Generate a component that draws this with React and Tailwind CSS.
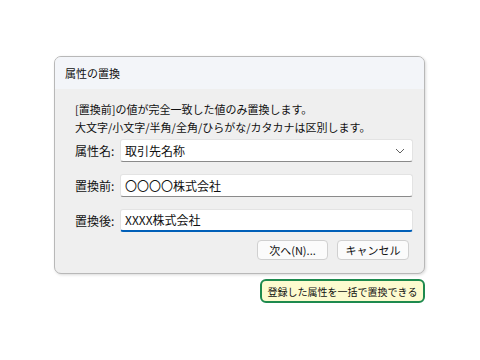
import React from "react";

const font = { fontFamily: '"Noto Sans CJK JP", "Noto Sans", sans-serif' };

const Field = ({ label, value, select, active }) => (
	<div className="flex items-center">
		<div className="w-[39px] text-right text-[12px] text-[#111] whitespace-nowrap">{label}</div>
		<div
			className={`ml-[6px] flex h-[23px] w-[293px] items-center justify-between rounded-[3px] bg-white pl-[4px] pr-[7px] text-[12px] text-[#111] border border-[#e3e3e3] ${
				active ? "border-b-2 border-b-[#005fb8]" : "border-b-[#8a8a8a]"
			}`}
		>
			<span className="leading-none">{value}</span>
			{select && (
				<svg width="10" height="6" viewBox="0 0 10 6" fill="none">
					<path d="M1 1l4 4 4-4" stroke="#606060" strokeWidth="1" />
				</svg>
			)}
		</div>
	</div>
);

const App = () => {
	return (
		<div className="h-[360px] w-[480px] bg-white pl-[54px] pt-[56px]" style={font}>
			{/* Dialog */}
			<div className="flex h-[218px] w-[371px] flex-col overflow-hidden rounded-[7px] border border-[#b8b8b8] bg-[#efefef] shadow-[1px_1px_3px_rgba(0,0,0,0.15)]">
				<div className="flex h-[32px] items-center bg-[#f3f5f9] pl-[10px] text-[11px] text-[#111]">
					属性の置換
				</div>
				<div className="flex flex-col pl-[20px] pt-[11px]">
					<p className="text-[11px] leading-[18px] text-[#111]">
						[置換前]の値が完全一致した値のみ置換します。
						<br />
						大文字/小文字/半角/全角/ひらがな/カタカナは区別します。
					</p>
					<div className="mt-[3px] flex flex-col gap-[12px]">
						<Field label="属性名:" value="取引先名称" select />
						<Field label="置換前:" value="〇〇〇〇株式会社" />
						<Field label="置換後:" value="XXXX株式会社" active />
					</div>
					<div className="mt-[8px] flex gap-[9px] pl-[182px]">
						<button className="flex h-[20px] w-[71px] items-center justify-center rounded-[4px] border border-[#d0d0d0] bg-[#fbfbfb] text-[11px] text-[#111]">
							次へ(N)...
						</button>
						<button className="flex h-[20px] w-[72px] items-center justify-center rounded-[4px] border border-[#d0d0d0] bg-[#fbfbfb] text-[11px] text-[#111]">
							キャンセル
						</button>
					</div>
				</div>
			</div>

			{/* Callout */}
			<div className="ml-[206px] mt-[5px] flex h-[24px] w-[165px] items-center justify-center rounded-[6px] border-2 border-[#1e8a4e] bg-[#fdfbcf] text-[10px] text-[#111]">
				登録した属性を一括で置換できる
			</div>
		</div>
	);
};

export default App;
